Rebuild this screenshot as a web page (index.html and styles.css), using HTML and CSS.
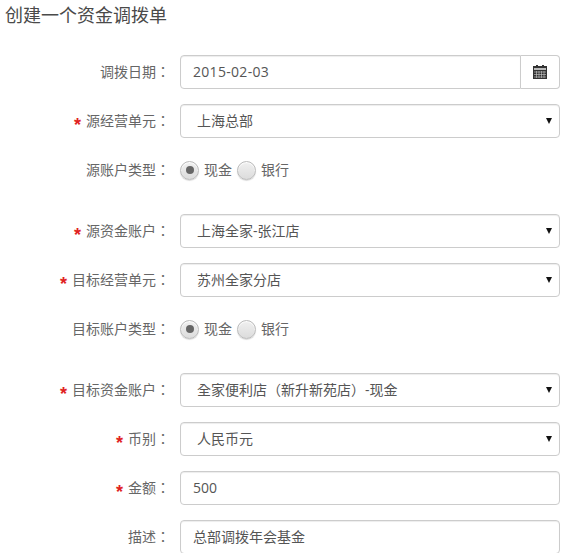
FILE: index.html
```html
<!DOCTYPE html>
<html lang="zh-CN">

<head>
    <meta charset="UTF-8">
    <meta name="viewport" content="width=device-width, initial-scale=1.0">
    <title>创建一个资金调拨单</title>
    <link rel="stylesheet" href="styles.css">
</head>

<body>
    <h1>创建一个资金调拨单</h1>

    <form class="form">
        <div class="row">
            <label class="label">调拨日期<span class="colon">：</span></label>
            <div class="date-group">
                <input class="control date-input" type="text" value="2015-02-03">
                <span class="date-btn">
                    <svg width="14" height="14" viewBox="0 0 14 14">
                        <rect x="0" y="1" width="14" height="13" fill="#333"/>
                        <rect x="1" y="3" width="12" height="2" fill="#bbb"/>
                        <rect x="3" y="0" width="2" height="2" fill="#333"/>
                        <rect x="9" y="0" width="2" height="2" fill="#333"/>
                        <path d="M1 7h12M1 9.500h12M1 12h12M3.500 6v7M6 6v7M8.500 6v7M11 6v7" stroke="#ccc" stroke-width="0.6" fill="none"/>
                    </svg>
                </span>
            </div>
        </div>

        <div class="row">
            <label class="label"><span class="star">*</span>源经营单元<span class="colon">：</span></label>
            <div class="select-wrap">
                <select class="control select"><option>上海总部</option></select>
            </div>
        </div>

        <div class="row radio-row">
            <label class="label">源账户类型<span class="colon">：</span></label>
            <div class="radios">
                <span class="radio checked"></span><span class="radio-text">现金</span>
                <span class="radio"></span><span class="radio-text">银行</span>
            </div>
        </div>

        <div class="row">
            <label class="label"><span class="star">*</span>源资金账户<span class="colon">：</span></label>
            <div class="select-wrap">
                <select class="control select"><option>上海全家-张江店</option></select>
            </div>
        </div>

        <div class="row">
            <label class="label"><span class="star">*</span>目标经营单元<span class="colon">：</span></label>
            <div class="select-wrap">
                <select class="control select"><option>苏州全家分店</option></select>
            </div>
        </div>

        <div class="row radio-row">
            <label class="label">目标账户类型<span class="colon">：</span></label>
            <div class="radios">
                <span class="radio checked"></span><span class="radio-text">现金</span>
                <span class="radio"></span><span class="radio-text">银行</span>
            </div>
        </div>

        <div class="row">
            <label class="label"><span class="star">*</span>目标资金账户<span class="colon">：</span></label>
            <div class="select-wrap">
                <select class="control select select-paren"><option>全家便利店（新升新苑店）-现金</option></select>
            </div>
        </div>

        <div class="row">
            <label class="label"><span class="star">*</span>币别<span class="colon">：</span></label>
            <div class="select-wrap">
                <select class="control select"><option>人民币元</option></select>
            </div>
        </div>

        <div class="row">
            <label class="label"><span class="star">*</span>金额<span class="colon">：</span></label>
            <input class="control" type="text" value="500">
        </div>

        <div class="row">
            <label class="label">描述<span class="colon">：</span></label>
            <input class="control" type="text" value="总部调拨年会基金">
        </div>
    </form>
</body>

</html>
```

FILE: styles.css
```css
html,
body {
    height: 553px;
    overflow: hidden;
}

body {
    margin: 0;
    background-color: #fff;
    color: #666;
    font-family: "Open Sans", "Noto Sans CJK SC", sans-serif;
    font-size: 14px;
}

h1 {
    margin: 0;
    padding: 2px 0 0 5px;
    height: 55px;
    box-sizing: border-box;
    font-size: 18px;
    font-weight: normal;
    line-height: 26px;
    color: #4a4a4a;
}

.row {
    display: flex;
    align-items: center;
    width: 560px;
    height: 34px;
    margin-bottom: 15px;
}

.radio-row {
    height: 46px;
    align-items: flex-start;
}

.label {
    flex: 0 0 170px;
    margin-right: 10px;
    padding-bottom: 2px;
    text-align: right;
    line-height: 32px;
    color: #666;
    white-space: nowrap;
}

/* centred full-width punctuation, the zh-CN locale form sits low left */
.colon {
    font-family: "Noto Sans CJK TC", sans-serif;
    font-feature-settings: "locl" 0;
}

.star {
    color: #e02222;
    font-family: "Liberation Sans", sans-serif;
    font-size: 18px;
    font-weight: bold;
    line-height: 1;
    margin-right: 5px;
    vertical-align: -5px;
}

.control {
    flex: 1;
    width: 100%;
    height: 34px;
    box-sizing: border-box;
    padding: 0 12px 2px;
    border: 1px solid #ccc;
    border-radius: 4px;
    background-color: #fff;
    color: #555;
    font-family: inherit;
    font-size: 14px;
    box-shadow: inset 0 1px 1px rgba(0, 0, 0, 0.075);
}

.date-group {
    flex: 1;
    display: flex;
}

.date-input {
    border-radius: 4px 0 0 4px;
    letter-spacing: 0.3px;
}

.date-btn {
    flex: 0 0 38px;
    display: flex;
    align-items: center;
    justify-content: center;
    border: 1px solid #ccc;
    border-left: none;
    border-radius: 0 4px 4px 0;
}

.select-wrap {
    flex: 1;
    position: relative;
}

.select {
    display: block;
    appearance: none;
    padding-left: 16px;
}

.select-paren {
    font-family: "Open Sans", "Noto Sans CJK TC", sans-serif;
    font-feature-settings: "locl" 0;
}

.select-wrap::after {
    content: "";
    position: absolute;
    right: 8px;
    top: 14px;
    border-left: 3px solid transparent;
    border-right: 3px solid transparent;
    border-top: 6px solid #111;
}

.radios {
    display: flex;
    align-items: center;
    height: 34px;
}

.radio {
    width: 19px;
    height: 19px;
    box-sizing: border-box;
    border: 1px solid #bbb;
    border-radius: 50%;
    background: linear-gradient(#f0f0f0, #dcdcdc);
    box-shadow: inset 0 1px 1px #fff, 0 1px 1px rgba(0, 0, 0, 0.15);
    display: flex;
    align-items: center;
    justify-content: center;
}

.radio.checked::before {
    content: "";
    width: 8px;
    height: 8px;
    border-radius: 50%;
    background-color: #666;
}

.radio-text {
    margin: 0 5px 2px 5px;
    color: #666;
}
```
